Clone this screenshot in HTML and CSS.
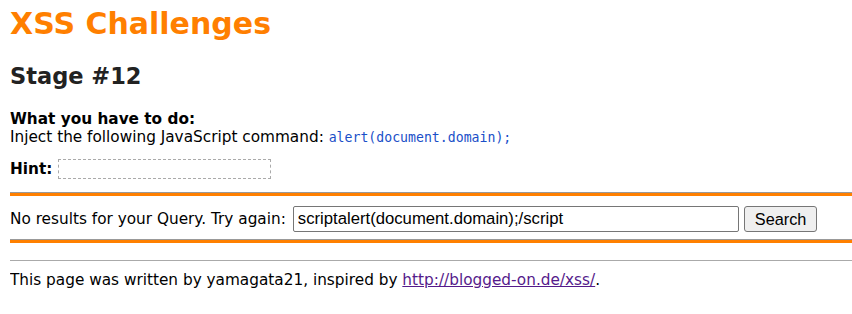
FILE: index.html
```html
<!DOCTYPE html>
<html>
<head>
<meta charset="utf-8">
<title>XSS Challenges</title>
<link rel="stylesheet" href="styles.css">
</head>
<body>
<h1 class="title">XSS Challenges</h1>
<h2 class="stage">Stage #12</h2>
<div class="task">
  <b>What you have to do:</b><br>
  Inject the following JavaScript command: <code class="cmd">alert(document.domain);</code>
</div>
<div class="hint-row"><b>Hint:</b> <span class="hint"></span></div>
<div class="bar"></div>
<form class="search">
  <span class="label">No results for your Query. Try again:</span>
  <input class="query" type="text" value="scriptalert(document.domain);/script">
  <button class="btn" type="button">Search</button>
</form>
<div class="bar"></div>
<div class="rule"></div>
<p class="footer">This page was written by yamagata21, inspired by <a class="link" href="#">http://blogged-on.de/xss/</a>.</p>
</body>
</html>
```
FILE: styles.css
```css
html, body {
  background: #fff;
}
body {
  margin: 0 0 0 10px;
  font-family: "DejaVu Sans", Verdana, sans-serif;
  font-size: 15.3px;
  color: #000;
}
.title {
  margin: 6px 0 0 0;
  font-size: 30px;
  font-weight: bold;
  color: #ff7f00;
  line-height: 36px;
}
.stage {
  margin: 20px 0 0 0;
  font-size: 22.5px;
  line-height: 28px;
  color: #222;
}
.task {
  margin-top: 20px;
  line-height: 18px;
}
.cmd {
  font-family: "DejaVu Sans Mono", monospace;
  font-size: 13.2px;
  color: #1a4fc8;
}
.hint-row {
  margin-top: 11px;
  display: flex;
  align-items: center;
  gap: 6px;
  height: 21px;
}
.hint {
  display: inline-block;
  width: 211px;
  height: 18px;
  border: 1px dashed #aaa;
}
.bar {
  margin-top: 13px;
  border-top: 1px solid #999;
  height: 3px;
  background: #ff8000;
}
.search {
  margin: 9px 0 0 0;
  display: flex;
  align-items: center;
  height: 28px;
}
.label {
  margin-right: 7px;
}
.query {
  width: 446px;
  height: 26px;
  box-sizing: border-box;
  border: 1px solid #767676;
  border-radius: 2px;
  padding: 0 4px;
  font-family: "Liberation Sans", Arial, sans-serif;
  font-size: 16.7px;
  margin: 0;
  color: #000;
}
.btn {
  margin-left: 5px;
  height: 26px;
  padding: 0 10px;
  font-family: "Liberation Sans", Arial, sans-serif;
  font-size: 16.3px;
  background: #efefef;
  border: 1px solid #767676;
  border-radius: 3px;
  color: #000;
}
.search + .bar {
  margin-top: 6px;
}
.rule {
  margin-top: 17px;
  border-top: 1px solid #aaa;
  height: 1px;
}
.footer {
  margin: 9px 0 0 0;
  line-height: 18px;
}
.link {
  color: #551a8b;
}
```
